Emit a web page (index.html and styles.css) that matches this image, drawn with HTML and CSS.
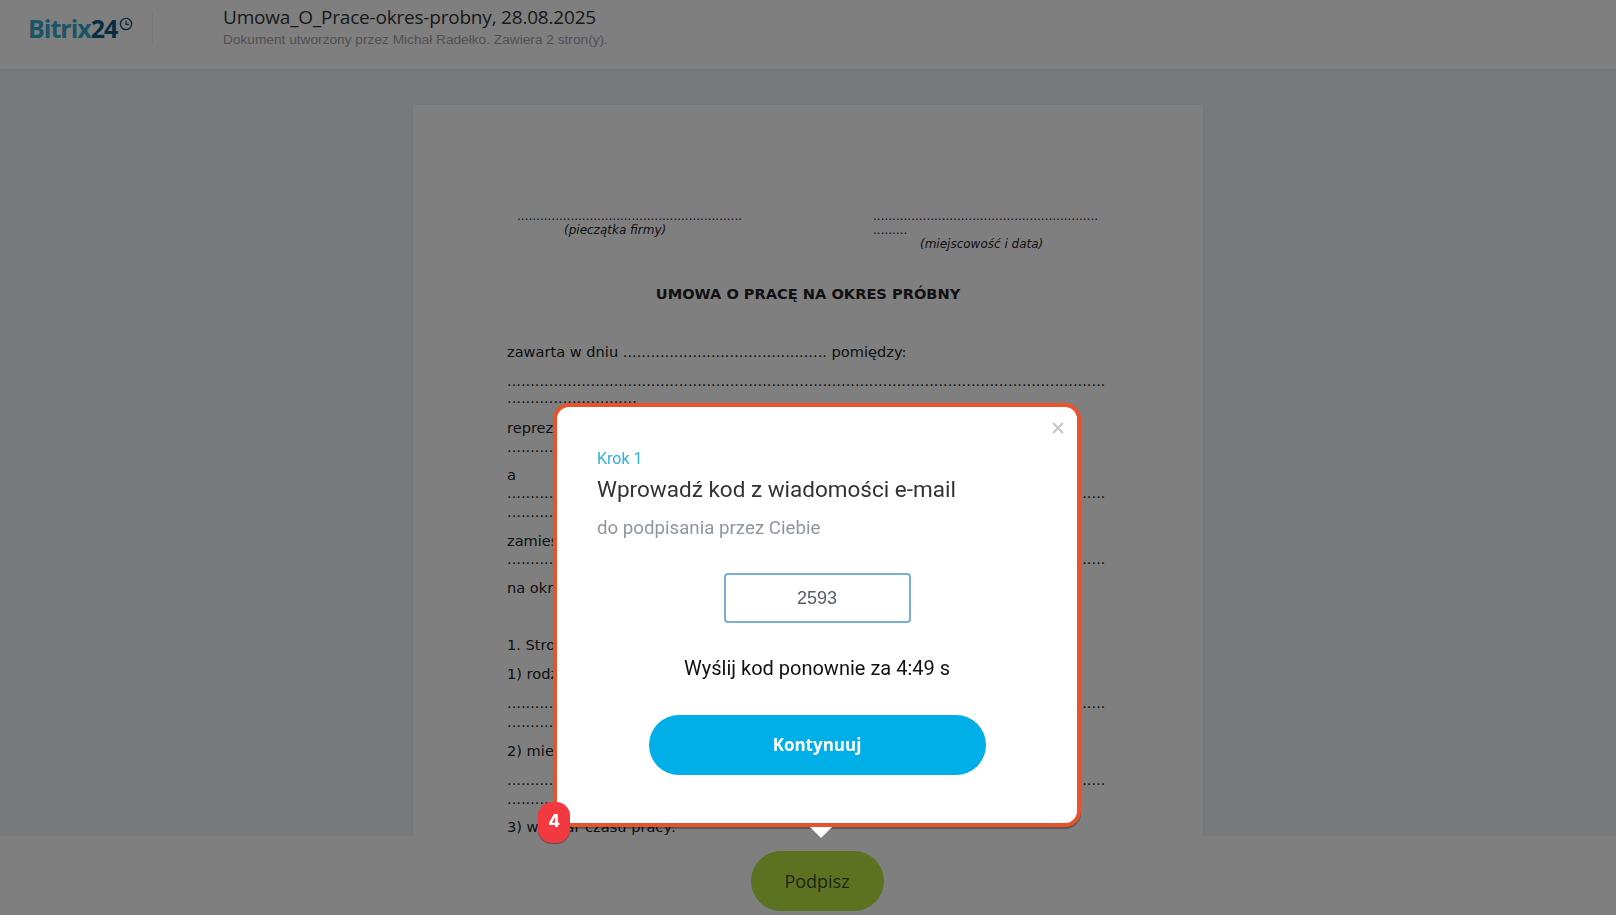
FILE: index.html
```html
<!DOCTYPE html>
<html lang="pl">
<head>
  <meta charset="UTF-8" />
  <meta name="viewport" content="width=device-width, initial-scale=1" />
  <title>Umowa_O_Prace-okres-probny, 28.08.2025</title>
  <link rel="stylesheet" href="styles.css">
</head>
<body>
  <div class="page">
    <header class="topbar">
      <div class="logo">
        <span class="logo-name">Bitrix</span><span class="logo-num">24</span>
        <svg class="logo-clock" width="14" height="14" viewBox="0 0 14 14" fill="none">
          <circle cx="7" cy="7" r="5.6" stroke="#0f4d73" stroke-width="1.4"/>
          <path d="M7 3.8V7.4H10" stroke="#0f4d73" stroke-width="1.3"/>
        </svg>
      </div>
      <div class="doc-info">
        <div class="doc-title">Umowa_O_Prace-okres-probny, 28.08.2025</div>
        <div class="doc-sub">Dokument utworzony przez Michał Radełko. Zawiera 2 stron(y).</div>
      </div>
    </header>

    <main class="viewer">
      <article class="sheet">
        <div class="stamp-row">
          <div class="stamp">
            <div class="dots-small">...........................................................</div>
            <div class="stamp-label">(pieczątka firmy)</div>
          </div>
          <div class="stamp">
            <div class="dots-small">....................................................................</div>
            <div class="stamp-label">(miejscowość i data)</div>
          </div>
        </div>

        <h2 class="sheet-title">UMOWA O PRACĘ NA OKRES PRÓBNY</h2>

        <p>zawarta w dniu ............................................ pomiędzy:</p>
        <p class="dots dots-first">.............................................................................................................................................................</p>
        <p class="tight">reprezentowanym przez:<br><span class="dots">..............................................................................</span></p>
        <p>a<br><span class="dots">.............................................................................................................................................................</span></p>
        <p>zamieszkałym w:<br><span class="dots">.................................................................................................................................</span></p>
        <p>na okres próbny.</p>
        <p class="tight">&nbsp;</p>
        <p>1. Strony ustalają następujące warunki:</p>
        <p class="near">1) rodzaj umówionej pracy:</p>
        <p class="dots">.............................................................................................................................................................</p>
        <p class="near">2) miejsce wykonywania pracy:</p>
        <p class="dots">.............................................................................................................................................................</p>
        <p>3) wymiar czasu pracy:</p>
      </article>
    </main>

    <footer class="signbar">
      <button class="sign-btn" type="button">Podpisz</button>
    </footer>
  </div>

  <div class="overlay"></div>

  <section class="modal">
    <button class="modal-close" type="button" aria-label="Zamknij">
      <svg width="12" height="12" viewBox="0 0 12 12" fill="none">
        <path d="M1 1L11 11M11 1L1 11" stroke="#c4c9cd" stroke-width="2.2"/>
      </svg>
    </button>
    <div class="step">Krok 1</div>
    <h1 class="modal-title">Wprowadź kod z wiadomości e-mail</h1>
    <div class="modal-sub">do podpisania przez Ciebie</div>
    <input class="code-input" type="text" value="2593" />
    <div class="resend">Wyślij kod ponownie za 4:49 s</div>
    <button class="continue-btn" type="button">Kontynuuj</button>
    <div class="modal-arrow"></div>
    <div class="step-badge">4</div>
  </section>
</body>
</html>
```

FILE: styles.css
```css
html, body {
  margin: 0;
  height: 100%;
  overflow: hidden;
}
body {
  background-color: #eff2f6;
  font-family: "DejaVu Sans", sans-serif;
}
.page {
  display: flex;
  flex-direction: column;
  height: 915px;
}
.topbar {
  flex: none;
  display: flex;
  height: 69px;
  box-sizing: border-box;
  background-color: #fff;
  box-shadow: 0 1px 2px rgba(0,0,0,0.06);
  position: relative;
}
.logo {
  width: 124px;
  height: 30px;
  margin: 13px 0 0 28px;
  display: flex;
  align-items: center;
  font-family: "Open Sans", sans-serif;
  font-weight: 700;
  font-size: 25px;
  letter-spacing: -1px;
  border-right: 1px solid #eceef0;
}
.logo-name {
  color: #35a9cf;
}
.logo-num {
  color: #0f5a85;
}
.logo-clock {
  margin: -8px 0 0 2px;
}
.doc-info {
  margin-left: 70px;
  padding-top: 4px;
}
.doc-title {
  font-family: "Open Sans", sans-serif;
  font-size: 19px;
  letter-spacing: -0.2px;
  line-height: 26px;
  color: #333;
}
.doc-sub {
  font-family: "Liberation Sans", sans-serif;
  font-size: 13.7px;
  line-height: 18px;
  color: #a3a3a3;
  margin-top: 1px;
}
.viewer {
  flex: 1;
  overflow: hidden;
  display: flex;
  justify-content: center;
  padding-top: 36px;
}
.sheet {
  width: 790px;
  height: 1100px;
  box-sizing: border-box;
  padding: 104px 94px 0;
  background-color: #fff;
  box-shadow: 0 1px 3px rgba(0,0,0,0.06);
  font-size: 14.6px;
  line-height: 18.5px;
  color: #222;
}
.stamp-row {
  display: flex;
  gap: 129px;
  padding-left: 10px;
  font-size: 12px;
  line-height: 14px;
}
.stamp {
  width: 227px;
}
.dots-small {
  overflow-wrap: anywhere;
}
.stamp-label {
  margin-left: 47px;
  font-style: italic;
}
.sheet-title {
  margin: 34px 0 40px;
  font-size: 14.6px;
  line-height: 18px;
  font-weight: 700;
  text-align: center;
}
.sheet p {
  margin: 0 0 10.4px;
}
.sheet p.tight {
  margin-bottom: 9.4px;
}
.sheet p.near {
  margin-bottom: 11px;
}
.sheet p.dots-first {
  line-height: 17px;
  margin-bottom: 13.4px;
}
.dots {
  overflow-wrap: anywhere;
}
.signbar {
  flex: none;
  height: 79px;
  background-color: #fff;
  display: flex;
  justify-content: center;
  padding: 15px 0 0 18px;
  box-sizing: border-box;
  position: relative;
}
.sign-btn {
  width: 133px;
  height: 60px;
  border: none;
  border-radius: 30px;
  background-color: #b9e541;
  color: #444c30;
  font-family: "Open Sans", sans-serif;
  font-size: 18px;
}
.overlay {
  position: fixed;
  inset: 0;
  background-color: rgba(0,0,0,0.5);
}
.modal {
  position: fixed;
  left: 553px;
  top: 403px;
  width: 528px;
  height: 424px;
  box-sizing: border-box;
  padding: 42px 40px 0;
  background-color: #fff;
  border: 4px solid #e8532b;
  border-radius: 16px;
  box-shadow: 0 2px 1px rgba(0,0,0,0.3);
  display: flex;
  flex-direction: column;
  font-family: Roboto, sans-serif;
}
.modal-close {
  position: absolute;
  top: 15px;
  right: 13px;
  padding: 0;
  border: none;
  background: none;
  line-height: 0;
}
.step {
  font-size: 16px;
  line-height: 20px;
  color: #2fb0de;
}
.modal-title {
  margin: 4px 0 0;
  font-size: 22.5px;
  line-height: 32px;
  font-weight: 400;
  color: #333;
}
.modal-sub {
  margin-top: 10px;
  font-size: 18.7px;
  line-height: 26px;
  color: #8f96a0;
}
.code-input {
  align-self: center;
  width: 187px;
  height: 50px;
  box-sizing: border-box;
  margin-top: 32px;
  border: 2px solid #7aaed6;
  border-radius: 4px;
  text-align: center;
  font-family: "Liberation Sans", sans-serif;
  font-size: 18px;
  color: #535c69;
  outline: none;
}
.resend {
  margin-top: 31px;
  text-align: center;
  font-size: 20px;
  line-height: 28px;
  color: #111;
}
.continue-btn {
  align-self: center;
  width: 337px;
  height: 60px;
  margin-top: 33px;
  padding-bottom: 3px;
  border: none;
  border-radius: 30px;
  background-color: #00aee8;
  color: #fff;
  font-family: "Open Sans", sans-serif;
  font-weight: 700;
  font-size: 17px;
}
.modal-arrow {
  position: absolute;
  left: 253px;
  top: 420px;
  width: 0;
  height: 0;
  border-left: 11px solid transparent;
  border-right: 11px solid transparent;
  border-top: 11px solid #fff;
}
.step-badge {
  position: absolute;
  left: -19px;
  top: 395px;
  width: 32px;
  height: 41px;
  border-radius: 14px;
  background-color: #f2393f;
  box-shadow: 0 1px 1px rgba(0,0,0,0.4);
  color: #fff;
  font-family: Inter, sans-serif;
  font-weight: 800;
  font-size: 17px;
  line-height: 38px;
  text-align: center;
}
```
